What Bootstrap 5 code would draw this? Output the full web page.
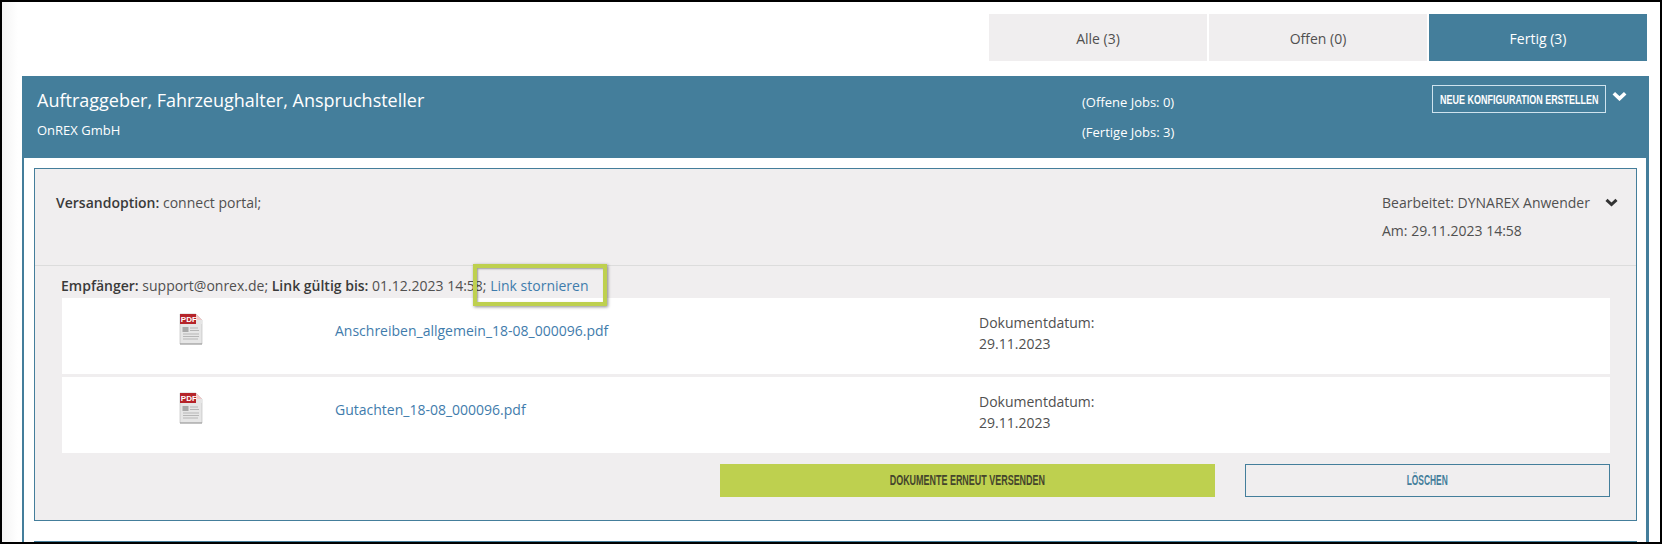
<!DOCTYPE html>
<html lang="de">
<head>
<meta charset="utf-8">
<title>Jobs</title>
<link href="https://cdn.jsdelivr.net/npm/bootstrap@5.3.0/dist/css/bootstrap.min.css" rel="stylesheet">
<style>
html,body{margin:0;height:544px;overflow:hidden;background:#fff}
body{font-family:"Open Sans","Noto Sans",sans-serif;font-size:14px;color:#505050}
.frame{height:544px;border:solid #000;border-width:2px 2px 2px 2px;overflow:hidden;position:relative;background:linear-gradient(90deg,#f4f4f4,#fff 16px)}
.tabbar{margin:12px 13px 15px 0;justify-content:flex-end;gap:2px}
.tabitem{width:218px;height:47px;background:#f0eeef;color:#505050;display:flex;align-items:center;justify-content:center;text-decoration:none;padding-top:1px}
.tabitem.on{background:#447e9b;color:#fff}
.panelbox{margin:0 11px 0 20px;border:solid #447e9b;border-width:0 3px 0 2px;background:#fff}
.panelhead{height:82px;background:#447e9b;color:#fff;margin:0 -3px 0 -2px;padding:0 15px;position:relative}
.ptitle{font-size:18px;line-height:24px;padding-top:12px;margin:0;font-weight:400}
.psub{font-size:13px;line-height:16px;margin-top:10px}
.jobs{position:absolute;left:1060px;top:11px;font-size:13px;line-height:30px}
.newbtn{position:absolute;left:1410px;top:9px;width:174px;height:28px;border:1px solid #cfe3ee;background:transparent;color:#fff;padding:0;white-space:nowrap}
.squeeze{display:inline-block;font-family:"Liberation Sans",sans-serif;font-weight:700;white-space:nowrap;margin:0 -60px}
.newbtn .squeeze{font-size:12.5px;transform:scaleX(.718)}
.chev{position:absolute;display:block}
.innerbox{margin:10px 9px 20px 10px;border:1px solid #447e9b;background:#f0eeef;height:353px}
.innerhead{height:97px;border-bottom:1px solid #dcdcdc;padding:20px 21px 0;position:relative;line-height:28px}
.editbox{position:absolute;left:1347px;top:20px;line-height:28px}
.innerbody{padding:0 26px 0 27px}
.rcpt{height:32px;line-height:40px;white-space:nowrap;margin-left:-1px}
.rcpt b,.innerhead b{font-weight:600;color:#3a3a3a}
.docrow{height:76px;background:#fff;margin-bottom:3px;display:grid;grid-template-columns:273px 644px 1fr;position:relative}
.iconcell{padding:15px 0 0 117px}
.namecell{padding-top:22px}
.namecell a,.rcpt a{color:#3f7cac;text-decoration:none}
.datecell{padding-top:14px;line-height:21px}
.actions{margin-top:11px;display:flex}
.actbtn{height:33px;border:0;padding:0 0 1px;white-space:nowrap}
.actbtn .squeeze{font-size:14px}
.actgreen .squeeze{transform:scaleX(.64)}
.actline .squeeze{transform:scaleX(.6)}
.actgreen{margin-left:658px;width:496px;background:#bed04f;color:#45452c}
.actline{margin-left:30px;width:365px;background:transparent;border:1px solid #447e9b;color:#447e9b}
.nextbox{border-top:2px solid #447e9b;margin:0 9px 0 10px}
.callout{position:absolute;left:471px;top:262px;width:134px;height:42px;border:4.5px solid #bed04f;box-shadow:1px 1px 3px rgba(0,0,0,.45),inset 1px 1px 2px rgba(0,0,0,.35);pointer-events:none}
</style>
</head>
<body>
<div class="frame">
  <div class="d-flex tabbar">
    <a class="tabitem" href="#">Alle (3)</a>
    <a class="tabitem" href="#">Offen (0)</a>
    <a class="tabitem on" href="#">Fertig (3)</a>
  </div>
  <div class="panelbox">
    <div class="panelhead">
      <h1 class="ptitle">Auftraggeber, Fahrzeughalter, Anspruchsteller</h1>
      <div class="psub">OnREX GmbH</div>
      <div class="jobs">(Offene Jobs: 0)<br>(Fertige Jobs: 3)</div>
      <button class="newbtn" type="button"><span class="squeeze">NEUE KONFIGURATION ERSTELLEN</span></button>
      <svg class="chev" style="left:1590px;top:15px" width="15" height="10" viewBox="0 0 15 10"><path d="M1.8 2.2 7.5 7.6l5.7-5.4" fill="none" stroke="#fff" stroke-width="3.6"/></svg>
    </div>
    <div class="innerbox">
      <div class="innerhead">
        <b>Versandoption:</b> connect portal;
        <div class="editbox">Bearbeitet: DYNAREX Anwender<br>Am: 29.11.2023 14:58</div>
        <svg class="chev" style="left:1570px;top:29px" width="13" height="9" viewBox="0 0 13 9"><path d="M1.5 1.8 6.5 6.5l5-4.7" fill="none" stroke="#333" stroke-width="3"/></svg>
      </div>
      <div class="innerbody">
        <div class="rcpt"><b>Empfänger:</b> support@onrex.de; <b>Link gültig bis:</b> 01.12.2023 14:58; <a href="#">Link stornieren</a></div>
        <div class="docrow">
          <div class="iconcell"><svg width="24" height="32" viewBox="0 0 24 32"><path d="M1 1h16l6 6v24H1z" fill="#e6e6e6" stroke="#bbb" stroke-width=".6"/><path d="M1 1h16v10H1z" fill="#b5242a"/><path d="M17 1l6 6h-6z" fill="#f3c9c9"/><path d="M17 7h6v4H17z" fill="#e6e6e6"/><text x="1.8" y="9" font-family="Liberation Sans" font-size="8" font-weight="700" fill="#fff">PDF</text><rect x="3.5" y="14" width="6" height="5" fill="#a8a8a8"/><path d="M11 15h8M11 17.5h9M4 21h16M4 23.5h16M4 26h15" stroke="#aaa" stroke-width=".8"/><path d="M1 31h22" stroke="#999" stroke-width="1"/></svg></div>
          <div class="namecell"><a href="#">Anschreiben_allgemein_18-08_000096.pdf</a></div>
          <div class="datecell">Dokumentdatum:<br>29.11.2023</div>
        </div>
        <div class="docrow">
          <div class="iconcell"><svg width="24" height="32" viewBox="0 0 24 32"><path d="M1 1h16l6 6v24H1z" fill="#e6e6e6" stroke="#bbb" stroke-width=".6"/><path d="M1 1h16v10H1z" fill="#b5242a"/><path d="M17 1l6 6h-6z" fill="#f3c9c9"/><path d="M17 7h6v4H17z" fill="#e6e6e6"/><text x="1.8" y="9" font-family="Liberation Sans" font-size="8" font-weight="700" fill="#fff">PDF</text><rect x="3.5" y="14" width="6" height="5" fill="#a8a8a8"/><path d="M11 15h8M11 17.5h9M4 21h16M4 23.5h16M4 26h15" stroke="#aaa" stroke-width=".8"/><path d="M1 31h22" stroke="#999" stroke-width="1"/></svg></div>
          <div class="namecell"><a href="#">Gutachten_18-08_000096.pdf</a></div>
          <div class="datecell">Dokumentdatum:<br>29.11.2023</div>
        </div>
        <div class="actions">
          <button class="actbtn actgreen" type="button"><span class="squeeze">DOKUMENTE ERNEUT VERSENDEN</span></button>
          <button class="actbtn actline" type="button"><span class="squeeze">LÖSCHEN</span></button>
        </div>
      </div>
    </div>
    <div class="nextbox"></div>
  </div>
  <div class="callout"></div>
</div>
<script src="https://cdn.jsdelivr.net/npm/bootstrap@5.3.0/dist/js/bootstrap.bundle.min.js"></script>
</body>
</html>
